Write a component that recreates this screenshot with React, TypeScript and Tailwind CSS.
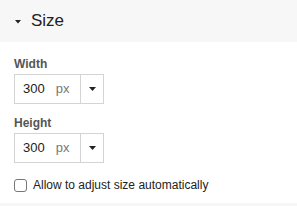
import React from "react";

function SizeField({ label }: { label: string }) {
  return (
    <div className="flex flex-col">
      <div className="text-[12px] font-bold text-[#555] leading-[14px] h-[14px]">{label}</div>
      <div className="mt-[3px] flex w-[90px] h-[30px] border border-[#d4d4d4] bg-white">
        <div className="flex items-center w-[65px] pl-[8px] text-[13px] text-[#222]">
          <span>300</span>
          <span className="ml-[11px] text-[#777]">px</span>
        </div>
        <div className="flex items-center justify-center flex-1 border-l border-[#d4d4d4]">
          <svg width="7" height="4" viewBox="0 0 7 4">
            <path d="M0 0 L7 0 L3.5 4 Z" fill="#222" />
          </svg>
        </div>
      </div>
    </div>
  );
}

export default function App() {
  return (
    <div className="w-[297px] h-[206px] bg-white flex flex-col" style={{ fontFamily: '"Liberation Sans", Arial, sans-serif' }}>
      <div className="h-[42px] bg-[#f7f7f7] flex items-center pl-[15px]">
        <svg width="6" height="4" viewBox="0 0 6 4" className="mt-[2px]">
          <path d="M0 0 L6 0 L3 3.5 Z" fill="#222" />
        </svg>
        <span className="ml-[10px] text-[17px] text-[#222]">Size</span>
      </div>
      <div className="flex flex-col pl-[14px] pt-[15px] flex-1">
        <SizeField label="Width" />
        <div className="mt-[12px]">
          <SizeField label="Height" />
        </div>
        <label className="mt-[13px] flex items-center">
          <span className="w-[13px] h-[13px] border border-[#777] rounded-[3px] bg-white" />
          <span className="ml-[6px] text-[12px] text-[#222]">Allow to adjust size automatically</span>
        </label>
      </div>
      <div className="h-[3px] bg-[#f7f7f7]" />
    </div>
  );
}
